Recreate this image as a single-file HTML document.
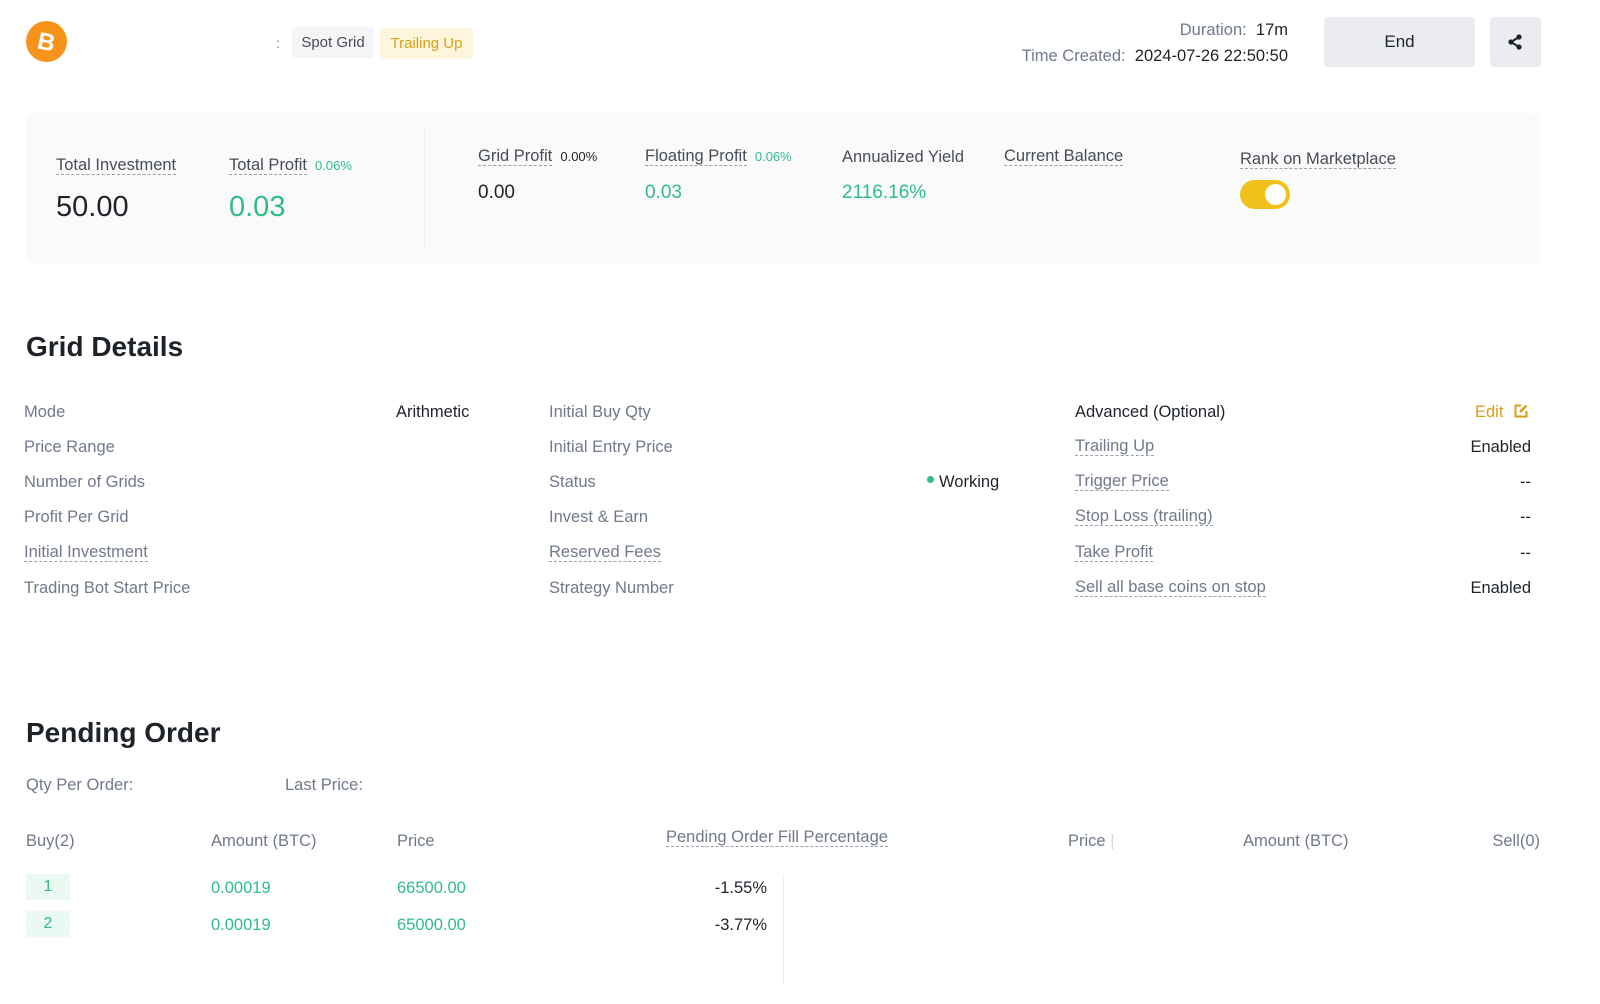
<!DOCTYPE html>
<html><head><meta charset="utf-8"><style>
*{margin:0;padding:0;box-sizing:border-box}
body{width:1600px;height:1004px;background:#fff;font-family:"Liberation Sans",sans-serif;color:#1e2329;position:relative;overflow:hidden}
.a{position:absolute;white-space:nowrap;line-height:20px}
.g{color:#707a8a}
.gr{color:#2ebd85}
.u{border-bottom:1px dashed #9aa1ab;line-height:19px}
.l{font-size:16.5px;color:#707a8a}
.v{font-size:16.5px;color:#1e2329}
.s{font-size:13px;color:#2ebd85}
</style></head><body>
<!-- header -->
<svg class="a" style="left:26px;top:21px" width="41" height="41" viewBox="0 0 41 41"><circle cx="20.5" cy="20.5" r="20.5" fill="#f7931a"/><text x="20.5" y="29" text-anchor="middle" font-family="Liberation Sans" font-weight="bold" font-size="24" fill="#fff" transform="rotate(12 20.5 20.5)">B</text></svg>
<div class="a" style="left:276px;top:33px;font-size:14px;color:#707a8a">:</div>
<div class="a" style="left:292px;top:27px;height:31px;width:82px;background:#f5f5f5;border-radius:4px;font-size:15px;line-height:31px;text-align:center;color:#474d57">Spot Grid</div>
<div class="a" style="left:380px;top:28px;height:31px;width:93px;background:#fdf6dc;border-radius:4px;font-size:15px;line-height:31px;text-align:center;color:#d89f14">Trailing Up</div>
<div class="a" style="right:312px;top:20px;font-size:16.5px"><span class="g">Duration:</span>&nbsp;&nbsp;17m</div>
<div class="a" style="right:312px;top:46px;font-size:16.5px"><span class="g">Time Created:</span>&nbsp;&nbsp;2024-07-26 22:50:50</div>
<div class="a" style="left:1324px;top:17px;width:151px;height:50px;background:#eaecef;border-radius:4px;font-size:17px;line-height:50px;text-align:center;font-weight:500">End</div>
<div class="a" style="left:1490px;top:17px;width:51px;height:50px;background:#eaecef;border-radius:4px"><svg style="position:absolute;left:17px;top:17px" width="16" height="16" viewBox="0 0 16 16"><circle cx="12" cy="3" r="2.6" fill="#1e2329"/><circle cx="12" cy="13" r="2.6" fill="#1e2329"/><circle cx="4" cy="8" r="2.6" fill="#1e2329"/><path d="M12 3L4 8L12 13" stroke="#1e2329" stroke-width="2" fill="none"/></svg></div>
<!-- stats box -->
<div class="a" style="left:26px;top:113px;width:1514px;height:151px;background:#fafafa;border-radius:8px"></div>
<div class="a" style="left:424px;top:128px;width:1px;height:119px;background:#eaecef"></div>
<div class="a" style="left:56px;top:156px"><span class="l u" style="color:#474d57">Total Investment</span></div>
<div class="a" style="left:229px;top:156px"><span class="l u" style="color:#474d57">Total Profit</span> <span class="s">&nbsp;0.06%</span></div>
<div class="a" style="left:56px;top:191px;font-size:29px;line-height:32px">50.00</div>
<div class="a gr" style="left:229px;top:191px;font-size:29px;line-height:32px">0.03</div>
<div class="a" style="left:478px;top:147px"><span class="l u" style="color:#474d57">Grid Profit</span> <span class="s" style="color:#1e2329">&nbsp;0.00%</span></div>
<div class="a" style="left:645px;top:147px"><span class="l u" style="color:#474d57">Floating Profit</span> <span class="s">&nbsp;0.06%</span></div>
<div class="a l" style="left:842px;top:147px;color:#474d57">Annualized Yield</div>
<div class="a" style="left:1004px;top:147px"><span class="l u" style="color:#474d57">Current Balance</span></div>
<div class="a" style="left:1240px;top:150px"><span class="l u" style="color:#474d57">Rank on Marketplace</span></div>
<div class="a" style="left:478px;top:182px;font-size:19px;line-height:22px">0.00</div>
<div class="a gr" style="left:645px;top:182px;font-size:19px;line-height:22px">0.03</div>
<div class="a gr" style="left:842px;top:182px;font-size:19px;line-height:22px">2116.16%</div>
<div class="a" style="left:1240px;top:180px;width:50px;height:29px;background:#f0c11a;border-radius:15px"><div style="position:absolute;right:4px;top:4px;width:21px;height:21px;background:#fff;border-radius:50%"></div></div>
<!-- Grid Details -->
<div class="a" style="left:26px;top:330px;font-size:28px;font-weight:bold;line-height:34px">Grid Details</div>
<div class="a l" style="left:24px;top:402px">Mode</div>
<div class="a l" style="left:24px;top:437px">Price Range</div>
<div class="a l" style="left:24px;top:472px">Number of Grids</div>
<div class="a l" style="left:24px;top:507px">Profit Per Grid</div>
<div class="a" style="left:24px;top:543px"><span class="l u">Initial Investment</span></div>
<div class="a l" style="left:24px;top:578px">Trading Bot Start Price</div>
<div class="a v" style="left:396px;top:402px">Arithmetic</div>
<div class="a l" style="left:549px;top:402px">Initial Buy Qty</div>
<div class="a l" style="left:549px;top:437px">Initial Entry Price</div>
<div class="a l" style="left:549px;top:472px">Status</div>
<div class="a l" style="left:549px;top:507px">Invest &amp; Earn</div>
<div class="a" style="left:549px;top:543px"><span class="l u">Reserved Fees</span></div>
<div class="a l" style="left:549px;top:578px">Strategy Number</div>
<div class="a v" style="left:927px;top:472px"><span style="display:inline-block;width:7px;height:7px;border-radius:50%;background:#2ebd85;vertical-align:middle;margin-right:5px;position:relative;top:-3px"></span>Working</div>
<div class="a v" style="left:1075px;top:402px;font-weight:500">Advanced (Optional)</div>
<div class="a" style="right:72px;top:402px;font-size:16.5px;color:#d89f14">Edit <svg width="14" height="14" viewBox="0 0 14 14" style="vertical-align:-1px;margin-left:6px"><path d="M7 1.5H1.5v11h11V7" stroke="#d89f14" stroke-width="2" fill="none"/><path d="M6 8l6.5-6.5" stroke="#d89f14" stroke-width="2.4"/></svg></div>
<div class="a" style="left:1075px;top:437px"><span class="l u">Trailing Up</span></div>
<div class="a" style="left:1075px;top:472px"><span class="l u">Trigger Price</span></div>
<div class="a" style="left:1075px;top:507px"><span class="l u">Stop Loss (trailing)</span></div>
<div class="a" style="left:1075px;top:543px"><span class="l u">Take Profit</span></div>
<div class="a" style="left:1075px;top:578px"><span class="l u">Sell all base coins on stop</span></div>
<div class="a v" style="right:69px;top:437px">Enabled</div>
<div class="a v" style="right:69px;top:472px">--</div>
<div class="a v" style="right:69px;top:507px">--</div>
<div class="a v" style="right:69px;top:543px">--</div>
<div class="a v" style="right:69px;top:578px">Enabled</div>
<!-- Pending Order -->
<div class="a" style="left:26px;top:716px;font-size:28px;font-weight:bold;line-height:34px">Pending Order</div>
<div class="a l" style="left:26px;top:775px">Qty Per Order:</div>
<div class="a l" style="left:285px;top:775px">Last Price:</div>
<div class="a l" style="left:26px;top:831px">Buy(2)</div>
<div class="a l" style="left:211px;top:831px">Amount (BTC)</div>
<div class="a l" style="left:397px;top:831px">Price</div>
<div class="a" style="left:666px;top:828px"><span class="l u">Pending Order Fill Percentage</span></div>
<div class="a l" style="left:1068px;top:831px">Price <span style="color:#d5d8dc">|</span></div>
<div class="a l" style="left:1243px;top:831px">Amount (BTC)</div>
<div class="a l" style="right:60px;top:831px">Sell(0)</div>
<div class="a" style="left:783px;top:874px;width:1px;height:110px;background:#eaecef"></div>
<div class="a gr" style="left:26px;top:874px;width:44px;height:26px;background:#eafaf3;border-radius:2px;font-size:16px;line-height:26px;text-align:center">1</div>
<div class="a gr" style="left:26px;top:911px;width:44px;height:26px;background:#eafaf3;border-radius:2px;font-size:16px;line-height:26px;text-align:center">2</div>
<div class="a gr" style="left:211px;top:878px;font-size:16.5px">0.00019</div>
<div class="a gr" style="left:211px;top:915px;font-size:16.5px">0.00019</div>
<div class="a gr" style="left:397px;top:878px;font-size:16.5px">66500.00</div>
<div class="a gr" style="left:397px;top:915px;font-size:16.5px">65000.00</div>
<div class="a v" style="right:833px;top:878px">-1.55%</div>
<div class="a v" style="right:833px;top:915px">-3.77%</div>
</body></html>
